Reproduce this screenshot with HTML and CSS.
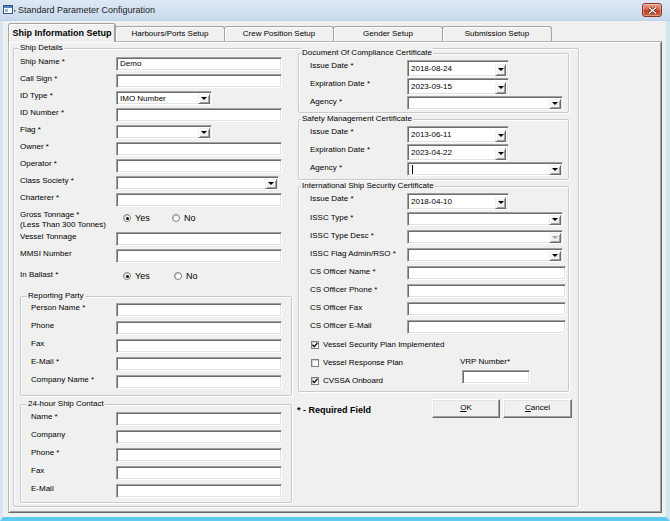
FILE: index.html
```html
<!DOCTYPE html>
<html lang="en">
<head>
<meta charset="utf-8">
<title>Standard Parameter Configuration</title>
<link rel="stylesheet" href="styles.css">
</head>
<body>
<div class="window">
  <div class="titlebar">
    <svg class="appicon" width="13" height="12" viewBox="0 0 13 12">
      <rect x="0.5" y="1.5" width="9" height="8" fill="#fff" stroke="#3f5673"/>
      <rect x="1" y="2" width="8" height="2" fill="#4f86c9"/>
      <rect x="2" y="5" width="3" height="3" fill="#8fb8e8"/>
      <rect x="11" y="6" width="1.5" height="1.5" fill="#3f5673"/>
    </svg>
    <span class="title">Standard Parameter Configuration</span>
    <div class="close">
      <svg width="9" height="7" viewBox="0 0 9 7">
        <path d="M1 0.5 L8 6.5 M8 0.5 L1 6.5" stroke="#5a241a" stroke-width="2.6"/>
        <path d="M1 0.5 L8 6.5 M8 0.5 L1 6.5" stroke="#fff" stroke-width="1.3"/>
      </svg>
    </div>
  </div>
  <div class="client">
    <div class="tabs">
      <div class="tab active">Ship Information Setup</div>
      <div class="tab">Harbours/Ports Setup</div>
      <div class="tab">Crew Position Setup</div>
      <div class="tab">Gender Setup</div>
      <div class="tab">Submission Setup</div>
    </div>
    <div class="tabpage">
      <div class="group ship">
        <span class="legend">Ship Details</span>
        <div class="colL">
          <div class="row"><span class="lbl">Ship Name *</span><div class="tb w166">Demo</div></div>
          <div class="row"><span class="lbl">Call Sign *</span><div class="tb w166"></div></div>
          <div class="row"><span class="lbl">ID Type *</span><div class="cb w96"><span class="val">IMO Number</span><span class="dd"><i></i></span></div></div>
          <div class="row"><span class="lbl">ID Number *</span><div class="tb w166"></div></div>
          <div class="row"><span class="lbl">Flag *</span><div class="cb w96"><span class="val"></span><span class="dd"><i></i></span></div></div>
          <div class="row"><span class="lbl">Owner *</span><div class="tb w166"></div></div>
          <div class="row"><span class="lbl">Operator *</span><div class="tb w166"></div></div>
          <div class="row"><span class="lbl">Class Society *</span><div class="cb w163"><span class="val"></span><span class="dd"><i></i></span></div></div>
          <div class="row"><span class="lbl">Charterer *</span><div class="tb w166"></div></div>
          <div class="row gross"><span class="lbl">Gross Tonnage *<br>(Less Than 300 Tonnes)</span>
            <div class="radios">
              <span class="ritem"><span class="radio on"></span>Yes</span>
              <span class="ritem"><span class="radio"></span>No</span>
            </div>
          </div>
          <div class="row"><span class="lbl">Vessel Tonnage</span><div class="tb w166"></div></div>
          <div class="row"><span class="lbl">MMSI Number</span><div class="tb w166"></div></div>
          <div class="row ballast"><span class="lbl">In Ballast *</span>
            <div class="radios">
              <span class="ritem"><span class="radio on"></span>Yes</span>
              <span class="ritem"><span class="radio"></span>No</span>
            </div>
          </div>

          <div class="group sub rp">
            <span class="legend">Reporting Party</span>
            <div class="row"><span class="lbl">Person Name *</span><div class="tb w166"></div></div>
            <div class="row"><span class="lbl">Phone</span><div class="tb w166"></div></div>
            <div class="row"><span class="lbl">Fax</span><div class="tb w166"></div></div>
            <div class="row"><span class="lbl">E-Mail *</span><div class="tb w166"></div></div>
            <div class="row"><span class="lbl">Company Name *</span><div class="tb w166"></div></div>
          </div>

          <div class="group sub sc">
            <span class="legend">24-hour Ship Contact</span>
            <div class="row"><span class="lbl">Name *</span><div class="tb w166"></div></div>
            <div class="row"><span class="lbl">Company</span><div class="tb w166"></div></div>
            <div class="row"><span class="lbl">Phone *</span><div class="tb w166"></div></div>
            <div class="row"><span class="lbl">Fax</span><div class="tb w166"></div></div>
            <div class="row"><span class="lbl">E-Mail</span><div class="tb w166"></div></div>
          </div>
        </div>

        <div class="colR">
          <div class="group cert doc">
            <span class="legend">Document Of Compliance Certificate</span>
            <div class="row rd"><span class="lbl">Issue Date *</span><div class="dp"><span class="val">2018-08-24</span><span class="dd"><i></i></span></div></div>
            <div class="row rd"><span class="lbl">Expiration Date *</span><div class="dp"><span class="val">2023-09-15</span><span class="dd"><i></i></span></div></div>
            <div class="row ra"><span class="lbl">Agency *</span><div class="cb w156"><span class="val"></span><span class="dd"><i></i></span></div></div>
          </div>

          <div class="group cert smc">
            <span class="legend">Safety Management Certificate</span>
            <div class="row rd"><span class="lbl">Issue Date *</span><div class="dp"><span class="val">2013-06-11</span><span class="dd"><i></i></span></div></div>
            <div class="row rd"><span class="lbl">Expiration Date *</span><div class="dp"><span class="val">2023-04-22</span><span class="dd"><i></i></span></div></div>
            <div class="row ra"><span class="lbl">Agency *</span><div class="cb w156"><span class="val"><span class="caret"></span></span><span class="dd"><i></i></span></div></div>
          </div>

          <div class="group cert issc">
            <span class="legend">International Ship Security Certificate</span>
            <div class="row rd"><span class="lbl">Issue Date *</span><div class="dp"><span class="val">2018-04-10</span><span class="dd"><i></i></span></div></div>
            <div class="row rt"><span class="lbl">ISSC Type *</span><div class="cb w156"><span class="val"></span><span class="dd"><i></i></span></div></div>
            <div class="row rt"><span class="lbl">ISSC Type Desc *</span><div class="cb w156 dis"><span class="val"></span><span class="dd"><i></i></span></div></div>
            <div class="row rt"><span class="lbl">ISSC Flag Admin/RSO *</span><div class="cb w156"><span class="val"></span><span class="dd"><i></i></span></div></div>
            <div class="row rt"><span class="lbl">CS Officer Name *</span><div class="tb w159"></div></div>
            <div class="row rt"><span class="lbl">CS Officer Phone *</span><div class="tb w159"></div></div>
            <div class="row rt"><span class="lbl">CS Officer Fax</span><div class="tb w159"></div></div>
            <div class="row rt"><span class="lbl">CS Officer E-Mail</span><div class="tb w159"></div></div>
            <div class="checks">
              <div class="chk c1"><span class="box"><svg width="6" height="6" viewBox="0 0 6 6"><path d="M0.6 2.8 L2.3 4.6 L5.4 1" fill="none" stroke="#000" stroke-width="1.3"/></svg></span>Vessel Security Plan Implemented</div>
              <div class="chk c2"><span class="box"></span>Vessel Response Plan</div>
              <div class="chk c3"><span class="box"><svg width="6" height="6" viewBox="0 0 6 6"><path d="M0.6 2.8 L2.3 4.6 L5.4 1" fill="none" stroke="#000" stroke-width="1.3"/></svg></span>CVSSA Onboard</div>
              <div class="vrp"><span class="vrplbl">VRP Number*</span><div class="tb w68"></div></div>
            </div>
          </div>

          <div class="footer">
            <span class="req">* - Required Field</span>
            <div class="btns">
              <div class="btn ok"><u>O</u>K</div>
              <div class="btn cancel"><u>C</u>ancel</div>
            </div>
          </div>
        </div>
      </div>
    </div>
  </div>
</div>
</body>
</html>
```

FILE: styles.css
```css
* { box-sizing: border-box; margin: 0; padding: 0; }

html, body { background: #f0f0f0; }

body {
  font-family: "Liberation Sans", Arial, sans-serif;
  font-size: 8px;
  line-height: 10px;
  color: #000;
  width: 670px;
  height: 521px;
  overflow: hidden;
}

.window {
  width: 670px;
  height: 521px;
  display: flex;
  flex-direction: column;
}

/* Title bar */
.titlebar {
  flex: none;
  height: 21px;
  display: flex;
  align-items: center;
  padding-left: 3px;
  background: linear-gradient(#dde8f5, #c9d9ed);
  border-bottom: 1px solid #c2d3e8;
}
.appicon { flex: none; margin-top: -1px; }
.title {
  margin-left: 2px;
  font-size: 9px;
  line-height: 11px;
  color: #1e1e1e;
  white-space: nowrap;
}
.close {
  margin-left: auto;
  margin-right: 8px;
  width: 20px;
  height: 14px;
  border: 1px solid #8a3424;
  border-radius: 3px;
  background: linear-gradient(#eba48e, #d8674c 45%, #c43f27 55%, #d06348);
  display: flex;
  align-items: center;
  justify-content: center;
  box-shadow: inset 0 0 0 1px rgba(255,255,255,0.35);
}

/* Client area */
.client {
  flex: 1;
  display: flex;
  flex-direction: column;
  background: #f0f0f0;
  border-left: 3px solid #d8e5f2;
  border-right: 4px solid #d3e4f3;
  border-bottom: 4px solid #5ccbee;
}

/* Tabs */
.tabs {
  flex: none;
  height: 20px;
  display: flex;
  align-items: flex-end;
  padding-left: 5px;
}
.tab {
  width: 110px;
  height: 15px;
  margin-left: -1px;
  border: 1px solid #a3a3a3;
  border-bottom: 0;
  border-radius: 3px 3px 0 0;
  background: #f0f0f0;
  box-shadow: inset 1px 1px 0 #fff;
  text-align: center;
  line-height: 13px;
  white-space: nowrap;
}
.tab.active {
  width: 108px;
  height: 19px;
  margin-left: 0;
  margin-bottom: -1px;
  position: relative;
  z-index: 1;
  font-weight: bold;
  font-size: 9px;
  line-height: 18px;
  box-shadow: inset 1px 1px 0 #fff, inset -1px 0 0 #a0a0a0;
}

.tabpage {
  margin-left: 5px;
  width: 654px;
  height: 472px;
  border: 1px solid;
  border-color: #b5b5b5 #696969 #696969 #b5b5b5;
  box-shadow: inset 1px 1px 0 #fff, inset -1px -1px 0 #a0a0a0;
  padding: 6px 0 0 4px;
}

/* Group boxes */
.group {
  position: relative;
  border: 1px solid #c9c9c9;
  border-radius: 2px;
  box-shadow: inset 1px 1px 0 #fff, 1px 1px 0 #fff;
}
.legend {
  position: absolute;
  top: -6px;
  left: 5px;
  padding: 0 1px;
  background: #f0f0f0;
  line-height: 10px;
  white-space: nowrap;
}

.ship {
  width: 566px;
  height: 459px;
  display: flex;
}
.colL {
  width: 284px;
  flex: none;
  padding: 8px 0 0 6px;
}
.colR {
  width: 271px;
  flex: none;
  padding-top: 4px;
}

/* Rows */
.row { display: flex; height: 17px; }
.lbl { flex: none; width: 96px; white-space: nowrap; }
.gross { height: 22px; }
.ballast { height: 20px; }
.ballast .lbl { padding-top: 4px; }

.radios { display: flex; padding: 3px 0 0 7px; }
.ballast .radios { padding-top: 5px; }
.ritem {
  display: flex;
  align-items: center;
  height: 10px;
  font-size: 9px;
}
.ritem:first-child { width: 49px; }
.ballast .ritem:first-child { width: 51px; }
.radio {
  width: 8px;
  height: 8px;
  border-radius: 50%;
  border: 1px solid #7f7f7f;
  background: #fff;
  margin-right: 4px;
  display: flex;
  align-items: center;
  justify-content: center;
  box-shadow: inset 1px 1px 0 #cfcfcf;
}
.radio.on::after {
  content: "";
  width: 3px;
  height: 3px;
  border-radius: 50%;
  background: #000;
}

/* Text box */
.tb {
  height: 14px;
  background: #fff;
  border: 1px solid;
  border-color: #a0a0a0 #fff #fff #a0a0a0;
  box-shadow: inset 1px 1px 0 #6d6d6d, inset -1px -1px 0 #e3e3e3;
  padding: 0 3px;
  line-height: 12px;
  white-space: nowrap;
  overflow: hidden;
}
.w166 { width: 166px; }
.w96 { width: 96px; }
.w163 { width: 163px; }
.w156 { width: 156px; }
.w159 { width: 159px; }
.w68 { width: 68px; }

/* Combo box */
.cb {
  height: 14px;
  display: flex;
  align-items: center;
  background: #fff;
  border: 1px solid;
  border-color: #a0a0a0 #fff #fff #a0a0a0;
  box-shadow: inset 1px 1px 0 #6d6d6d, inset -1px -1px 0 #e3e3e3;
  padding: 1px 1px 0 3px;
}
.val {
  flex: 1;
  display: flex;
  align-items: center;
  line-height: 10px;
  white-space: nowrap;
  overflow: hidden;
}
.dd {
  flex: none;
  width: 12px;
  height: 10px;
  background: #f0f0f0;
  border: 1px solid;
  border-color: #f0f0f0 #6d6d6d #6d6d6d #f0f0f0;
  box-shadow: inset 1px 1px 0 #fff, inset -1px -1px 0 #a0a0a0;
  display: flex;
  align-items: center;
  justify-content: center;
}
.dd i {
  width: 0;
  height: 0;
  border-left: 3px solid transparent;
  border-right: 3px solid transparent;
  border-top: 3px solid #000;
}
.cb.dis .dd i { border-top-color: #a5a5a5; }
.caret { width: 1px; height: 9px; background: #000; margin-left: 1px; }

/* Date picker */
.dp {
  width: 102px;
  height: 17px;
  display: flex;
  align-items: center;
  background: #fff;
  border: 1px solid;
  border-color: #a0a0a0 #fff #fff #a0a0a0;
  box-shadow: inset 1px 1px 0 #6d6d6d, inset -1px -1px 0 #e3e3e3;
  padding: 2px 2px 1px 3px;
}
.dp .dd { width: 11px; height: 12px; margin-top: 1px; }

/* Sub groups (left column) */
.sub {
  width: 272px;
  margin-top: 10px;
  padding: 6px 0 2px 10px;
}
.sub .row { height: 18px; }
.sub .lbl { width: 85px; }
.sub .legend { left: 6px; }
.sc { margin-top: 8px; padding-top: 7px; padding-bottom: 0; }

/* Certificate groups (right column) */
.cert {
  width: 271px;
  padding: 6px 0 1px 11px;
}
.cert .lbl { width: 97px; padding-top: 1px; }
.cert .legend { left: 2px; }
.cert .rd { height: 18px; }
.cert .ra { height: 15px; }
.cert .rt { height: 18px; }
.smc, .issc { margin-top: 6px; }
.smc { padding-bottom: 2px; }
.issc .rd { height: 19px; }

.checks {
  display: grid;
  grid-template-columns: 149px 1fr;
  grid-template-rows: 18px 18px 18px;
  margin: -2px 0 0 1px;
}
.chk { display: flex; align-items: center; white-space: nowrap; }
.c1 { grid-column: 1 / 3; grid-row: 1; }
.c2 { grid-column: 1; grid-row: 2; }
.c3 { grid-column: 1; grid-row: 3; }
.box {
  flex: none;
  width: 8px;
  height: 8px;
  border: 1px solid #7f7f7f;
  background: #fff;
  margin-right: 4px;
  box-shadow: inset 1px 1px 0 #cfcfcf;
  display: flex;
  align-items: center;
  justify-content: center;
}
.vrp { grid-column: 2; grid-row: 2 / 4; padding-top: 3px; }
.vrplbl { display: block; white-space: nowrap; }
.vrp .tb { margin: 3px 0 0 2px; }

/* Footer */
.footer {
  display: flex;
  align-items: center;
  margin: 7px 0 0 -1px;
  width: 275px;
  height: 19px;
}
.req {
  font-weight: bold;
  font-size: 9px;
  padding-top: 3px;
  white-space: nowrap;
}
.btns { margin-left: auto; display: flex; gap: 3px; }
.btn {
  height: 19px;
  width: 68px;
  border: 1px solid;
  border-color: #fff #696969 #696969 #fff;
  box-shadow: inset -1px -1px 0 #a0a0a0, inset 1px 1px 0 #e3e3e3;
  background: #f0f0f0;
  text-align: center;
  line-height: 16px;
}
.btn.cancel { width: 69px; }
```
